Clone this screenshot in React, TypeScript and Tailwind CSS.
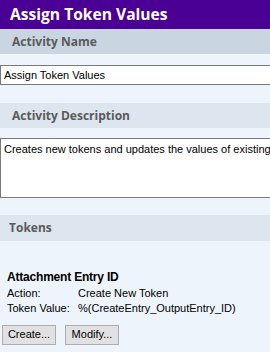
import React from "react";

export default function App() {
  const ui = { fontFamily: '"Liberation Sans", Arial, sans-serif' };
  const head = { fontFamily: '"Open Sans", "Noto Sans", sans-serif' };
  return (
    <div className="w-[270px] h-[352px] overflow-hidden bg-[#eef4fc]">
      <div className="h-[29px] bg-[#4a0094] pl-[10px] flex items-center text-white font-bold text-[15.6px] leading-none" style={head}>
        Assign Token Values
      </div>
      <div className="h-[25px] bg-[#c9d6e1] pl-[12px] flex items-center text-[#5a5a5a] font-bold text-[12px]" style={head}>
        Activity Name
      </div>
      <div className="pt-[11px]">
        <div className="w-[280px] h-[20px] bg-white border border-[#7a7a7a] pl-[3px] flex items-center text-[11px] text-black" style={ui}>
          Assign Token Values
        </div>
      </div>
      <div className="mt-[18px] h-[25px] bg-[#dde5ee] pl-[12px] flex items-center text-[#5a5a5a] font-bold text-[12px]" style={head}>
        Activity Description
      </div>
      <div className="pt-[10px]">
        <div className="w-[280px] h-[60px] bg-white border border-[#7a7a7a] pl-[3px] pt-[2px] text-[11px] text-black whitespace-nowrap overflow-hidden" style={ui}>
          Creates new tokens and updates the values of existing tokens
        </div>
      </div>
      <div className="mt-[17px] h-[26px] bg-[#dde5ee] pl-[9px] flex items-center text-[#5a5a5a] font-bold text-[12px]" style={head}>
        Tokens
      </div>
      <div className="pl-[7px] pt-[29px] text-[11px] leading-[15.5px] text-black" style={ui}>
        <div className="font-bold text-[12px] tracking-[-0.2px]">Attachment Entry ID</div>
        <div className="flex"><span className="w-[71px]">Action:</span><span>Create New Token</span></div>
        <div className="flex"><span className="w-[71px]">Token Value:</span><span>%(CreateEntry_OutputEntry_ID)</span></div>
      </div>
      <div className="flex gap-[9px] pl-[2px] pt-[8px]" style={ui}>
        <div className="w-[54px] h-[20px] bg-[#e1e1e1] border border-[#adadad] flex items-center justify-center text-[11px] text-black">Create...</div>
        <div className="w-[54px] h-[20px] bg-[#e1e1e1] border border-[#adadad] flex items-center justify-center text-[11px] text-black">Modify...</div>
      </div>
    </div>
  );
}
